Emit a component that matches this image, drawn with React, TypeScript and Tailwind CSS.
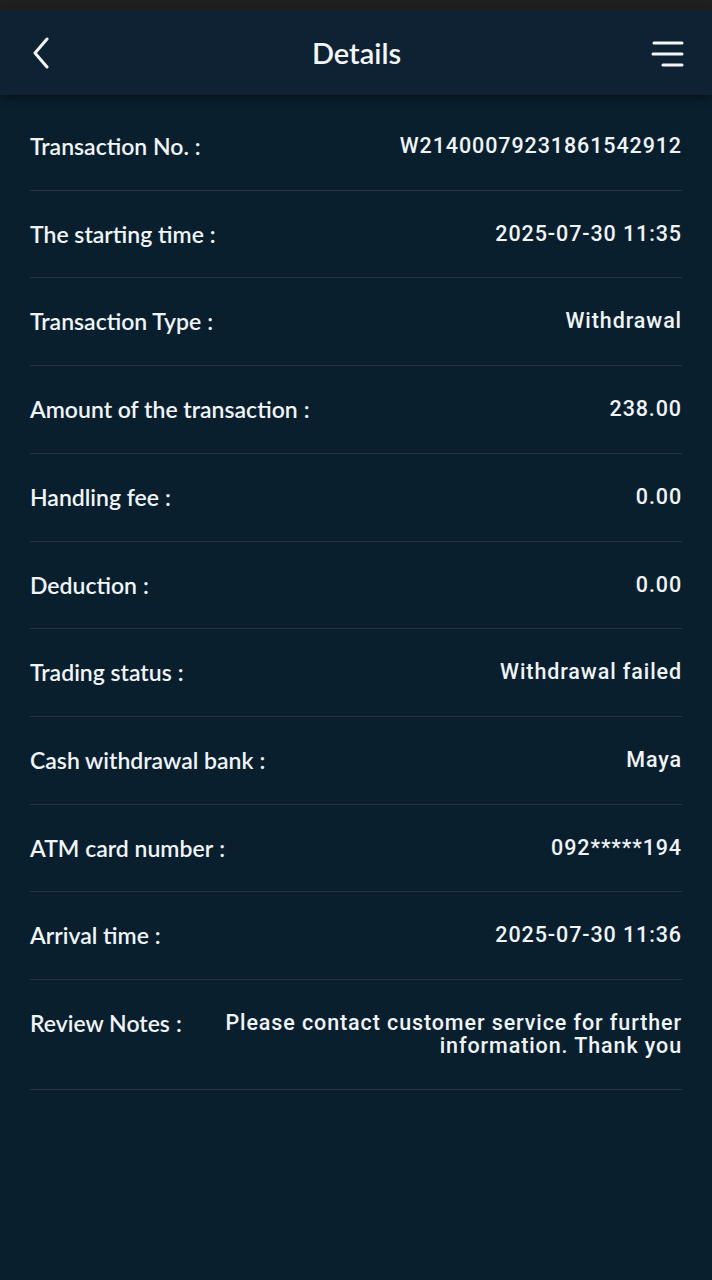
import React from "react";

type Row = { label: string; value: string };

const rows: Row[] = [
  { label: "Transaction No.", value: "W21400079231861542912" },
  { label: "The starting time", value: "2025-07-30 11:35" },
  { label: "Transaction Type", value: "Withdrawal" },
  { label: "Amount of the transaction", value: "238.00" },
  { label: "Handling fee", value: "0.00" },
  { label: "Deduction", value: "0.00" },
  { label: "Trading status", value: "Withdrawal failed" },
  { label: "Cash withdrawal bank", value: "Maya" },
  { label: "ATM card number", value: "092*****194" },
  { label: "Arrival time", value: "2025-07-30 11:36" },
  {
    label: "Review Notes",
    value: "Please contact customer service for further information. Thank you",
  },
];

const DetailRow: React.FC<{ row: Row }> = ({ row }) => (
  <div className="flex items-start justify-between gap-8 border-b border-[#243645] py-[32px] leading-[22.7px] text-[#eef4f7]">
    <span className="shrink-0 font-['Lato',sans-serif] text-[23px] font-semibold">
      {row.label}
      <span className="ml-[6px]">:</span>
    </span>
    <span className="text-right font-['Roboto',sans-serif] text-[21.5px] font-medium tracking-[0.9px]">
      {row.value}
    </span>
  </div>
);

export default function App() {
  return (
    <div className="min-h-[1280px] w-full bg-[#0a1f2e]">
      <div className="h-[10px] bg-[#201f1f]" />
      <header className="relative flex h-[85px] items-center justify-between bg-[#0f2233] px-[30px] shadow-[0_4px_8px_rgba(0,0,0,0.35)]">
        <svg width="20" height="32" viewBox="0 0 20 32" className="ml-[1px]">
          <path
            d="M16 2 L4 16 L16 30"
            fill="none"
            stroke="#f3f6f8"
            strokeWidth="3"
            strokeLinecap="round"
            strokeLinejoin="round"
          />
        </svg>
        <h1 className="ml-[12px] font-['Lato',sans-serif] text-[29px] font-semibold text-[#f3f6f8]">
          Details
        </h1>
        <svg width="34" height="28" viewBox="0 0 34 28" className="mr-[-2px]">
          <g stroke="#f3f6f8" strokeWidth="3" strokeLinecap="round">
            <line x1="4" y1="4" x2="32" y2="4" />
            <line x1="3" y1="15" x2="32" y2="15" />
            <line x1="13" y1="26" x2="32" y2="26" />
          </g>
        </svg>
      </header>
      <div className="px-[30px] pt-[8px]">
        {rows.map((row) => (
          <DetailRow key={row.label} row={row} />
        ))}
      </div>
    </div>
  );
}
